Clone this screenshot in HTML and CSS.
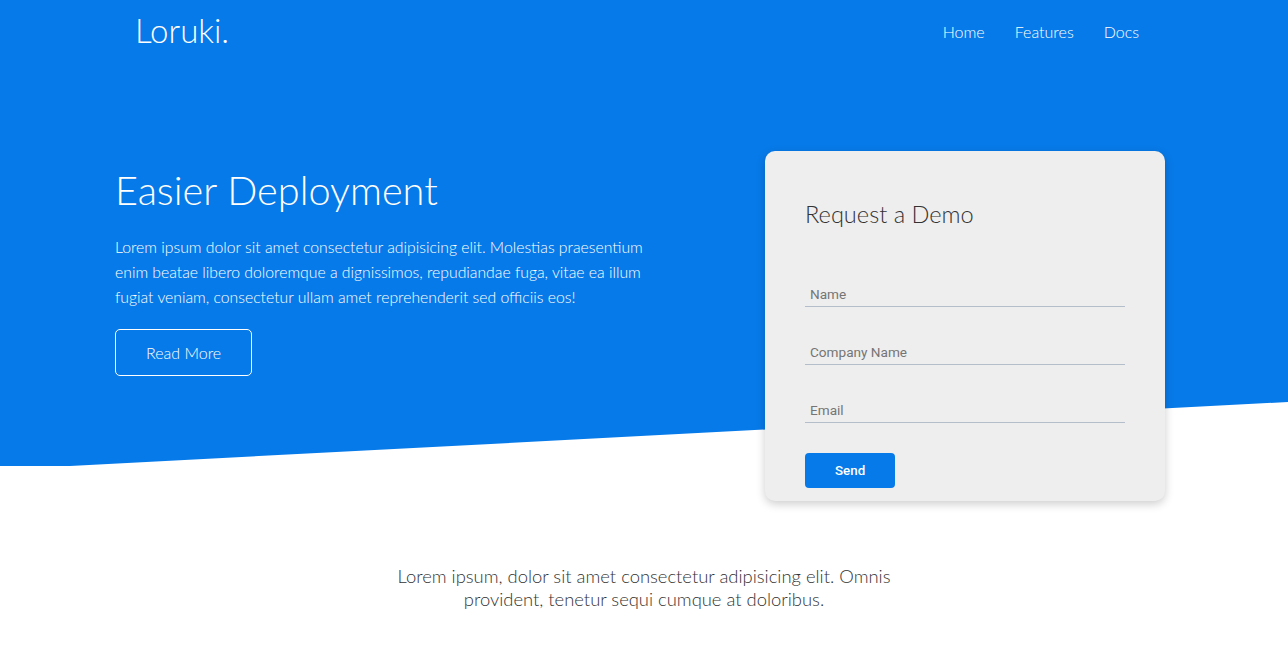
FILE: index.html
```html
<!DOCTYPE html>
<html lang="en">
<head>
<meta charset="UTF-8">
<title>Loruki</title>
<link rel="stylesheet" href="styles.css">
</head>
<body>
<header class="top">
  <nav class="navbar">
    <div class="nav-inner">
      <h1 class="logo">Loruki.</h1>
      <ul class="nav-links">
        <li><a href="#">Home</a></li>
        <li><a href="#">Features</a></li>
        <li><a href="#">Docs</a></li>
      </ul>
    </div>
  </nav>
  <section class="showcase">
    <div class="showcase-text">
      <h1>Easier Deployment</h1>
      <p>Lorem ipsum dolor sit amet consectetur adipisicing elit. Molestias praesentium enim beatae libero doloremque a dignissimos, repudiandae fuga, vitae ea illum fugiat veniam, consectetur ullam amet reprehenderit sed officiis eos!</p>
      <a href="#" class="btn btn-outline">Read More</a>
    </div>
    <div class="card">
      <h2>Request a Demo</h2>
      <form class="demo-form">
        <input type="text" placeholder="Name">
        <input type="text" placeholder="Company Name">
        <input type="email" placeholder="Email">
        <button type="button" class="btn-send">Send</button>
      </form>
    </div>
  </section>
</header>
<section class="intro">
  <p class="lead">Lorem ipsum, dolor sit amet consectetur adipisicing elit. Omnis provident, tenetur sequi cumque at doloribus.</p>
</section>
</body>
</html>
```

FILE: styles.css
```css
* {
  box-sizing: border-box;
  margin: 0;
  padding: 0;
}

body {
  font-family: Lato, "Open Sans", sans-serif;
  font-weight: 300;
  color: #333;
  line-height: 1.6;
  background: #fff;
}

a {
  text-decoration: none;
  color: inherit;
}

ul {
  list-style: none;
}

.top {
  position: relative;
  z-index: 0;
}

.top::before {
  content: "";
  position: absolute;
  left: 0;
  top: 0;
  width: 100%;
  height: 466px;
  background: #077ae9;
  clip-path: polygon(0 0, 100% 0, 100% 402px, 70px 466px, 0 466px);
  z-index: -1;
}

.navbar {
  height: 64px;
  color: #fff;
}

.nav-inner {
  width: 1020px;
  height: 100%;
  margin: 0 auto;
  display: flex;
  justify-content: space-between;
  align-items: center;
}

.logo {
  font-size: 33px;
  font-weight: 300;
  line-height: 1.2;
  padding-bottom: 3px;
  padding-left: 1px;
}

.nav-links {
  display: flex;
}

.nav-links a {
  display: block;
  padding: 0 15px;
  font-size: 16px;
  font-weight: 300;
  color: #fff;
}

.showcase {
  display: flex;
  align-items: flex-start;
  gap: 100px;
  padding: 87px 0 0 115px;
}

.showcase-text {
  width: 550px;
  margin-top: 15px;
  color: #fff;
}

.showcase-text h1 {
  font-size: 39.7px;
  font-weight: 300;
  line-height: 1.2;
}

.showcase-text p {
  font-size: 15.75px;
  line-height: 25px;
  margin: 20px 0;
}

.btn-outline {
  display: inline-block;
  padding: 10px 30px;
  border: 1px solid #fff;
  border-radius: 5px;
  font-size: 16px;
  line-height: 25.6px;
  color: #fff;
}

.card {
  width: 400px;
  height: 350px;
  padding: 44px 40px 40px;
  background: #eeeeee;
  border-radius: 10px;
  box-shadow: 0 3px 10px rgba(0, 0, 0, 0.2);
}

.card h2 {
  font-size: 23.6px;
  font-weight: 300;
  line-height: 38.4px;
  color: #333;
}

.demo-form {
  display: flex;
  flex-direction: column;
  gap: 30px;
  margin-top: 46px;
}

.demo-form input {
  width: 100%;
  border: 0;
  border-bottom: 1px solid #b4becb;
  background: transparent;
  padding: 7px 5px 4px;
  font-family: Roboto, "Liberation Sans", sans-serif;
  font-size: 13.6px;
  line-height: 16px;
  color: #333;
  outline: none;
}

.demo-form input::placeholder {
  color: #757575;
}

.btn-send {
  align-self: flex-start;
  padding: 10px 30px;
  border: none;
  border-radius: 4px;
  background: #077ae9;
  color: #fff;
  font-family: Roboto, "Liberation Sans", sans-serif;
  font-size: 13.333px;
  font-weight: 500;
  line-height: normal;
  cursor: pointer;
}

.intro {
  margin-top: 64px;
  display: flex;
  justify-content: center;
}

.lead {
  max-width: 530px;
  text-align: center;
  font-size: 18.4px;
  line-height: 22.5px;
  color: #333;
}
```
